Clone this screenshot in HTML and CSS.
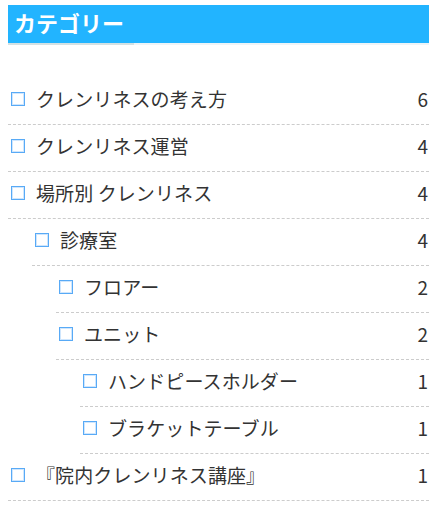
FILE: index.html
```html
<!DOCTYPE html>
<html lang="ja">
<head>
<meta charset="utf-8">
<link rel="stylesheet" href="styles.css">
</head>
<body>
<div class="widget">
  <h2 class="widget-title">カテゴリー</h2>
  <ul class="cat-list">
    <li class="row lv0"><span class="box"></span><span class="name">クレンリネスの考え方</span><span class="count">6</span></li>
    <li class="row lv0"><span class="box"></span><span class="name">クレンリネス運営</span><span class="count">4</span></li>
    <li class="row lv0"><span class="box"></span><span class="name">場所別 クレンリネス</span><span class="count">4</span></li>
    <li class="row lv1"><span class="box"></span><span class="name">診療室</span><span class="count">4</span></li>
    <li class="row lv2"><span class="box"></span><span class="name">フロアー</span><span class="count">2</span></li>
    <li class="row lv2"><span class="box"></span><span class="name">ユニット</span><span class="count">2</span></li>
    <li class="row lv3"><span class="box"></span><span class="name">ハンドピースホルダー</span><span class="count">1</span></li>
    <li class="row lv3"><span class="box"></span><span class="name">ブラケットテーブル</span><span class="count">1</span></li>
    <li class="row lv0"><span class="box"></span><span class="name">『院内クレンリネス講座』</span><span class="count">1</span></li>
  </ul>
</div>
</body>
</html>
```

FILE: styles.css
```css
html, body {
  margin: 0;
  padding: 0;
  background: #ffffff;
}

body {
  font-family: "Noto Sans CJK JP", "Noto Sans", sans-serif;
  color: #333333;
}

.widget {
  width: 421px;
  padding: 5px 0 0 8px;
}

.widget-title {
  position: relative;
  margin: 0;
  height: 40px;
  padding: 0 0 0 6px;
  box-sizing: border-box;
  background: #22b4ff;
  color: #ffffff;
  font-size: 22px;
  font-weight: bold;
  line-height: 34px;
  border-bottom: 2px solid #eef4f7;
}

.widget-title::after {
  content: "";
  position: absolute;
  left: 0;
  bottom: -2px;
  width: 126px;
  height: 2px;
  background: #d3e1e3;
}

.cat-list {
  list-style: none;
  margin: 33px 0 0 0;
  padding: 0;
}

.row {
  display: flex;
  align-items: center;
  height: 47px;
  box-sizing: border-box;
  border-bottom: 1px dashed #cccccc;
  padding: 0 1px 5px 3px;
  font-size: 19px;
}

.lv1 { margin-left: 24px; }
.lv2 { margin-left: 48px; }
.lv3 { margin-left: 72px; }

.box {
  width: 14px;
  height: 14px;
  box-sizing: border-box;
  border: 1px solid #58aaf6;
  box-shadow: inset 0 0 0 1px #cfe6fd;
  margin-right: 11px;
  flex: none;
}

.name {
  flex: 1;
  letter-spacing: 0.1px;
}

.count {
  font-size: 19px;
}
```
